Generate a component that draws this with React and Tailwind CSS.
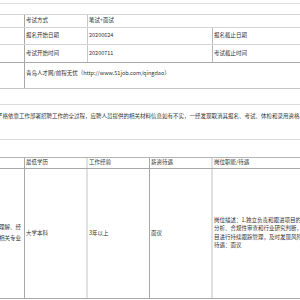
export default function App() {
  const font = { fontFamily: '"Noto Sans CJK SC", "Noto Sans", sans-serif' };
  return (
    <div className="w-[300px] h-[300px] overflow-hidden bg-white text-[#333] text-[5.5px] leading-none" style={font}>
      {/* top spacer */}
      <div className="h-[4px] border-b border-[#dedede]" />
      {/* row0 */}
      <div className="h-[11px] border-b border-[#d4d4d4]" />
      {/* row1 */}
      <div className="h-[13px] border-b border-[#d4d4d4] flex">
        <div className="w-[25px] border-r border-[#a8a8a8]" />
        <div className="w-[63px] border-r border-[#c8c8c8] flex items-center pl-[1px]">考试方式</div>
        <div className="flex-1 flex items-center pl-[1px]">笔试+面试</div>
      </div>
      {/* row2 */}
      <div className="h-[17px] border-b border-[#d4d4d4] flex">
        <div className="w-[25px] border-r border-[#a8a8a8]" />
        <div className="w-[63px] border-r border-[#c8c8c8] flex items-center pl-[1px]">报名开始日期</div>
        <div className="w-[125px] border-r border-[#b8b8b8] flex items-center pl-[1px]">20200624</div>
        <div className="flex-1 flex items-center pl-[1px]">报名截止日期</div>
      </div>
      {/* row3 */}
      <div className="h-[18px] border-b border-[#a8a8a8] flex">
        <div className="w-[25px] border-r border-[#a8a8a8]" />
        <div className="w-[63px] border-r border-[#c8c8c8] flex items-center pl-[1px]">考试开始时间</div>
        <div className="w-[125px] border-r border-[#b8b8b8] flex items-center pl-[1px]">20200711</div>
        <div className="flex-1 flex items-center pl-[1px]">考试截止时间</div>
      </div>
      {/* row4 */}
      <div className="h-[26px] border-b border-[#c4c4c4] flex">
        <div className="w-[25px] border-r border-[#a8a8a8]" />
        <div className="flex-1 flex items-center pl-[1px] pb-[4px] whitespace-nowrap">青岛人才网/前程无忧（http://www.51job.com/qingdao）</div>
      </div>
      {/* gap */}
      <div className="h-[16px] border-b border-[#dcdcdc]" />
      {/* paragraph */}
      <div className="h-[35px] border-b border-[#dcdcdc] overflow-hidden pt-[9px]">
        <div className="whitespace-nowrap ml-[-3px]">严格依靠工作部署招聘工作的全过程，应聘人员提供的相关材料信息如有不实，一经发现取消其报名、考试、体检和录用资格。招聘</div>
      </div>
      {/* gap */}
      <div className="h-[18px] border-b border-[#b4b4b4]" />
      {/* header */}
      <div className="h-[11px] border-b border-[#a8a8a8] flex">
        <div className="w-[25px] border-r border-[#a8a8a8]" />
        <div className="w-[63px] border-r-2 border-[#e2e2e2] flex items-center pl-[1px]">最低学历</div>
        <div className="w-[62px] border-r border-[#a8a8a8] flex items-center pl-[1px]">工作经验</div>
        <div className="w-[63px] border-r-2 border-[#e0e0e0] flex items-center pl-[1px]">薪资待遇</div>
        <div className="flex-1 flex items-center pl-[1px]">岗位职能/待遇</div>
      </div>
      {/* body */}
      <div className="h-[130px] border-b border-[#a8a8a8] flex">
        <div className="w-[25px] border-r border-[#a8a8a8] flex flex-col justify-center items-end overflow-hidden pr-[3px] leading-[11px] pb-[2px]">
          <div className="whitespace-nowrap">具有较强的沟通协调能力和理解、经</div>
          <div className="whitespace-nowrap">济、金融、财务、法律等相关专业</div>
        </div>
        <div className="w-[63px] border-r-2 border-[#e2e2e2] flex items-center pl-[1px]">大学本科</div>
        <div className="w-[62px] border-r border-[#a8a8a8] flex items-center pl-[1px]">3年以上</div>
        <div className="w-[63px] border-r-2 border-[#e0e0e0] flex items-center pl-[1px]">面议</div>
        <div className="flex-1 flex flex-col justify-center pl-[1px] leading-[8.5px] pb-[2px] overflow-hidden">
          <div className="whitespace-nowrap">岗位描述：1.独立负责和跟进项目的尽职调查</div>
          <div className="whitespace-nowrap">分析、合规性审查和行业研究判断，负责</div>
          <div className="whitespace-nowrap">目进行持续跟踪管理，及时发现风险并</div>
          <div className="whitespace-nowrap">待遇：面议</div>
        </div>
      </div>
    </div>
  );
}
